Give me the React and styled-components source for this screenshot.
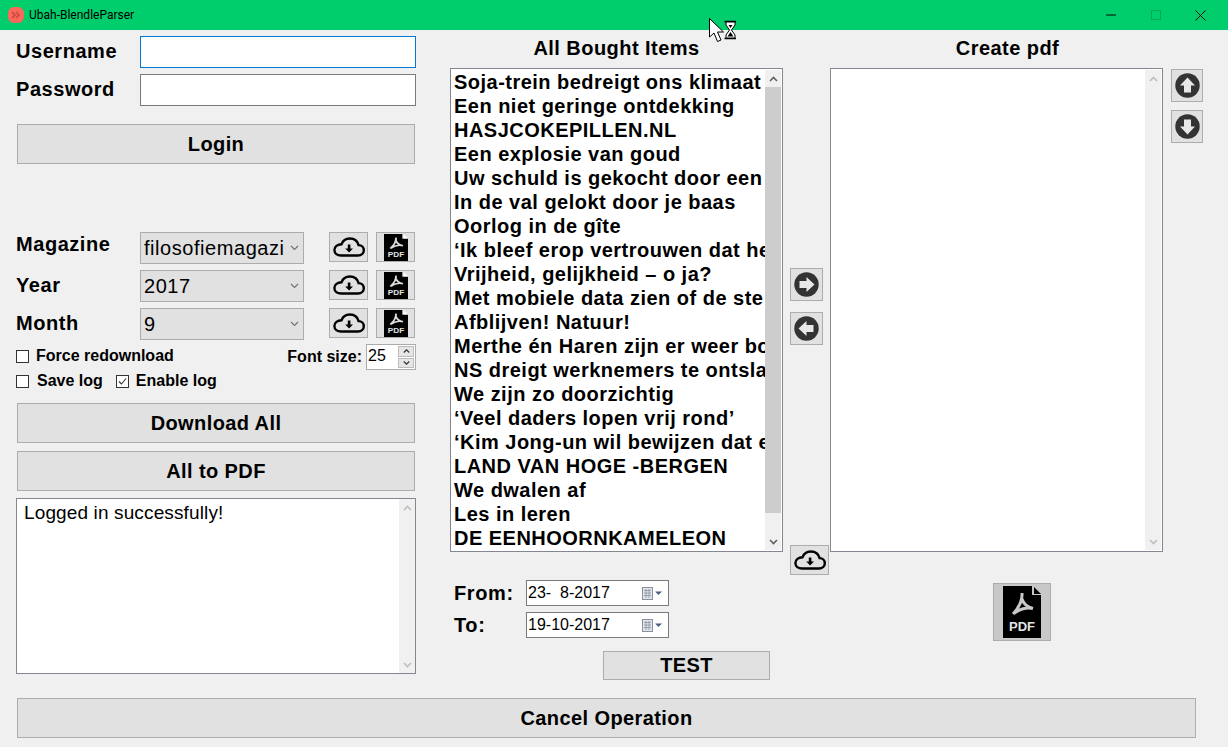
import React from "react";
import styled, { createGlobalStyle } from "styled-components";

const GlobalStyle = createGlobalStyle`
  html, body { margin: 0; padding: 0; height: 100%; overflow: hidden; background: #f0f0f0; }
  body { font-family: "Liberation Sans", Arial, sans-serif; color: #000; }
`;

const Window = styled.div`
  position: relative;
  width: 1228px;
  height: 747px;
  overflow: hidden;
  background: #f0f0f0;
`;

const TitleBar = styled.div`
  height: 30px;
  background: #00ce6c;
  display: flex;
  align-items: center;
  padding-left: 8px;
`;

const AppBadge = styled.div`
  width: 16px;
  height: 16px;
  border-radius: 6px;
  background: #f8695c;
  display: flex;
  align-items: center;
  justify-content: center;
`;

const AppName = styled.span`
  margin-left: 5px;
  font: 12px Roboto, sans-serif;
  flex: 1;
`;

const WinControl = styled.div`
  width: 45px;
  height: 30px;
  display: flex;
  align-items: center;
  justify-content: center;
  margin-right: ${(p) => p.$mr || 0}px;
`;

const Main = styled.div`
  display: flex;
  height: 668px;
  padding-left: 16px;
`;

const LeftColumn = styled.div`
  width: 400px;
  margin-right: 34px;
  padding-top: 6px;
  display: flex;
  flex-direction: column;
`;

const FieldRow = styled.div`
  display: flex;
  align-items: center;
  height: 32px;
  margin-bottom: 6px;
`;

const FieldLabel = styled.label`
  width: 124px;
  flex: none;
  font-size: 20px;
  font-weight: bold;
  letter-spacing: 0.55px;
  margin-top: ${(p) => p.$up || 0}px;
`;

const TextInput = styled.input`
  width: 276px;
  height: 32px;
  box-sizing: border-box;
  background: #fff;
  border: 1px solid ${(p) => (p.$focused ? "#0078d7" : "#7a7a7a")};
  outline: none;
  padding: 0 4px;
`;

const BigButton = styled.button`
  display: block;
  box-sizing: border-box;
  width: ${(p) => p.$w || 398}px;
  height: ${(p) => p.$h || 40}px;
  margin: ${(p) => p.$m || "0 0 0 1px"};
  background: #e1e1e1;
  border: 1px solid #adadad;
  font-family: inherit;
  font-size: 20px;
  font-weight: bold;
  letter-spacing: 0.4px;
  color: #000;
  padding: 0;
`;

const Select = styled.div`
  width: 164px;
  height: 32px;
  box-sizing: border-box;
  background: #e1e1e1;
  border: 1px solid #acacac;
  display: flex;
  align-items: center;
  font-size: 20px;
  letter-spacing: 0.55px;
  padding-left: 3px;
  padding-right: 4px;
`;

const SelectValue = styled.span`
  flex: 1;
  margin-right: 2px;
  overflow: hidden;
  white-space: nowrap;
`;

const IconButton = styled.button`
  box-sizing: border-box;
  flex: none;
  width: ${(p) => p.$w || 39}px;
  height: ${(p) => p.$h || 30}px;
  margin: ${(p) => p.$m || 0};
  padding: 0;
  background: ${(p) => p.$bg || "#e1e1e1"};
  border: 1px solid #adadad;
  display: flex;
  align-items: center;
  justify-content: center;
`;

const OptionsRow = styled.div`
  display: flex;
  align-items: center;
  height: ${(p) => p.$h}px;
  margin-top: ${(p) => p.$mt || 0}px;
`;

const CheckLabel = styled.label`
  display: flex;
  align-items: center;
  font-size: 16px;
  font-weight: bold;
  margin-right: 13px;
`;

const Box = styled.span`
  width: 13px;
  height: 13px;
  box-sizing: border-box;
  background: #fff;
  border: 1px solid #333;
  margin-right: ${(p) => p.$mr}px;
  display: flex;
  align-items: center;
  justify-content: center;
`;

const FontSize = styled.div`
  margin-left: auto;
  margin-top: 2px;
  display: flex;
  align-items: center;
  font-size: 16px;
  font-weight: bold;
`;

const Spinner = styled.div`
  width: 50px;
  height: 26px;
  margin-left: 4px;
  box-sizing: border-box;
  background: #fff;
  border: 1px solid #acacac;
  display: flex;
  font-size: 16px;
  font-weight: normal;
  padding-left: 1px;
  line-height: 22px;
`;

const SpinValue = styled.span`
  flex: 1;
`;

const SpinButtons = styled.div`
  width: 16px;
  display: flex;
  flex-direction: column;
  margin: 1px;
  gap: 1px;
`;

const SpinButton = styled.div`
  flex: 1;
  background: #e6e6e6;
  border: 1px solid #bcbcbc;
  display: flex;
  align-items: center;
  justify-content: center;
`;

const LogBox = styled.div`
  display: flex;
  box-sizing: border-box;
  width: 400px;
  height: 176px;
  margin-top: 7px;
  background: #fff;
  border: 1px solid #828790;
`;

const LogText = styled.div`
  flex: 1;
  font-size: 19px;
  letter-spacing: 0.13px;
  padding: 3px 0 0 7px;
`;

const MiddleColumn = styled.div`
  width: 333px;
  margin-right: 7px;
`;

const ColumnTitle = styled.div`
  height: 38px;
  line-height: 37px;
  text-align: center;
  font-size: 20px;
  font-weight: bold;
  letter-spacing: 0.45px;
  padding-left: ${(p) => p.$shift || 0}px;
`;

const ListBox = styled.div`
  display: flex;
  box-sizing: border-box;
  width: 333px;
  height: 484px;
  background: #fff;
  border: 1px solid #828790;
  padding: 1px;
`;

const ListItems = styled.div`
  flex: 1;
  min-width: 0;
  overflow: hidden;
  padding: 0 0 0 2px;
`;

const ListItem = styled.div`
  height: 24px;
  line-height: 24px;
  font-size: 20px;
  font-weight: bold;
  letter-spacing: 0.48px;
  white-space: nowrap;
`;

const ScrollBar = styled.div`
  flex: none;
  width: 16px;
  display: flex;
  flex-direction: column;
  background: #f0f0f0;
`;

const ScrollArrow = styled.div`
  height: 17px;
  flex: none;
  display: flex;
  align-items: center;
  justify-content: center;
`;

const ScrollThumb = styled.div`
  height: 426px;
  background: #cdcdcd;
`;

const ScrollTrack = styled.div`
  flex: 1;
`;

const DateRows = styled.div`
  margin-top: 28px;
  display: flex;
  flex-direction: column;
  gap: 6px;
`;

const DateRow = styled.div`
  display: flex;
  align-items: center;
  height: 26px;
  padding-left: 4px;
`;

const DateLabel = styled.span`
  width: 72px;
  font-size: 20px;
  font-weight: bold;
  letter-spacing: 0.6px;
`;

const DateInput = styled.div`
  width: 143px;
  height: 26px;
  box-sizing: border-box;
  background: #fff;
  border: 1px solid #7a7a7a;
  display: flex;
  align-items: center;
  justify-content: space-between;
  font-size: 16px;
  white-space: pre;
  padding: 0 4px 0 1px;
`;

const TransferColumn = styled.div`
  width: 39px;
  margin-right: 1px;
  padding-top: 238px;
  display: flex;
  flex-direction: column;
`;

const RightColumn = styled.div`
  width: 333px;
`;

const ArrowColumn = styled.div`
  margin-left: 8px;
  padding-top: 39px;
  display: flex;
  flex-direction: column;
  gap: 8px;
`;

const Footer = styled.div`
  padding-left: 17px;
`;

const CursorLayer = styled.div`
  position: absolute;
  left: 708px;
  top: 17px;
  pointer-events: none;
`;

const Cloud = () => (
  <svg width="32" height="20" viewBox="0 0 32 20">
    <path
      d="M8 18.5 H25 C28.5 18.5 30.8 16 30.8 13.2 C30.8 10.3 28.6 8.2 25.6 8.1 C24.6 4 21 1.5 16.8 1.5 C12.9 1.5 9.8 3.7 8.6 7.2 C4.5 7.4 1.4 9.8 1.4 13 C1.4 16.2 4.3 18.5 8 18.5 Z"
      fill="none"
      stroke="#000"
      strokeWidth="2.4"
    />
    <path d="M14.8 7.5 h2.6 v4 h2.6 l-3.9 4 -3.9 -4 h2.6 z" fill="#000" />
  </svg>
);

// stretched to whatever box it gets, the small ones are squatter than the big one
const PdfGlyph = ({ w, h, fold = "#000", mark = "#c8c8c8" }) => (
  <svg width={w} height={h} viewBox="0 0 38 52" preserveAspectRatio="none">
    <path d="M0 0 H29 V9 H38 V52 H0 Z" fill="#000" />
    <path d="M31 1 L38 8 H31 Z" fill={fold} />
    <path
      d="M19 7 C19.5 14 15.5 22 10 28 M19 13 C20.5 18 24 21 30 22.5 C24 21 16 23 11 27.5"
      fill="none"
      stroke={mark}
      strokeWidth="3"
    />
    <text x="19" y="45" textAnchor="middle" fontFamily="Liberation Sans" fontWeight="bold" fontSize="13" fill="#e4e4e4">
      PDF
    </text>
  </svg>
);

const RoundArrow = ({ dir }) => {
  const angle = { up: 0, right: 90, down: 180, left: 270 }[dir];
  return (
    <svg width="25" height="25" viewBox="0 0 25 25">
      <circle cx="12.5" cy="12.5" r="12.2" fill="#333" />
      <path
        d="M12.5 4.5 L20 12.5 H16 V19.5 H9 V12.5 H5 Z"
        fill="#e8e8e8"
        transform={`rotate(${angle} 12.5 12.5)`}
      />
    </svg>
  );
};

const Chevron = ({ up, color = "#606060", w = 9, sw = 1.6 }) => (
  <svg width={w} height="6" viewBox="0 0 9 6">
    <path
      d={up ? "M1 5 L4.5 1.5 L8 5" : "M1 1 L4.5 4.5 L8 1"}
      fill="none"
      stroke={color}
      strokeWidth={sw}
    />
  </svg>
);

const Scroller = ({ active }) => (
  <ScrollBar>
    <ScrollArrow>
      <Chevron up color={active ? "#606060" : "#bfbfbf"} />
    </ScrollArrow>
    {active && <ScrollThumb />}
    <ScrollTrack />
    <ScrollArrow>
      <Chevron color={active ? "#606060" : "#bfbfbf"} />
    </ScrollArrow>
  </ScrollBar>
);

const CalendarIcon = () => (
  <svg width="22" height="13" viewBox="0 0 22 13">
    <rect x="0.5" y="0.5" width="10" height="12" fill="#dfe3ea" stroke="#8a8f98" />
    <path d="M2 3.5 H9 M2 6 H9 M2 8.5 H9 M4 2 V11 M7 2 V11" stroke="#9aa0aa" />
    <path d="M13 4.5 H20 L16.5 8 Z" fill="#4d6185" />
  </svg>
);

const items = [
  "Soja-trein bedreigt ons klimaat",
  "Een niet geringe ontdekking",
  "HASJCOKEPILLEN.NL",
  "Een explosie van goud",
  "Uw schuld is gekocht door een",
  "In de val gelokt door je baas",
  "Oorlog in de gîte",
  "‘Ik bleef erop vertrouwen dat he",
  "Vrijheid, gelijkheid – o ja?",
  "Met mobiele data zien of de ste",
  "Afblijven! Natuur!",
  "Merthe én Haren zijn er weer bo",
  "NS dreigt werknemers te ontsla",
  "We zijn zo doorzichtig",
  "‘Veel daders lopen vrij rond’",
  "‘Kim Jong-un wil bewijzen dat e",
  "LAND VAN HOGE -BERGEN",
  "We dwalen af",
  "Les in leren",
  "DE EENHOORNKAMELEON",
];

const selects = [
  { label: "Magazine", value: "filosofiemagazi", up: -8 },
  { label: "Year", value: "2017", up: -2 },
  { label: "Month", value: "9", up: -2 },
];

export default function App() {
  return (
    <Window>
      <GlobalStyle />
      <TitleBar>
        <AppBadge>
          <svg width="10" height="8" viewBox="0 0 10 8">
            <path d="M1 1 L4 4 L1 7 M5 1 L8 4 L5 7" fill="none" stroke="#c9483c" strokeWidth="1.6" />
          </svg>
        </AppBadge>
        <AppName>Ubah-BlendleParser</AppName>
        <WinControl>
          <svg width="10" height="10" viewBox="0 0 10 10">
            <path d="M0 5 H10" stroke="#000" />
          </svg>
        </WinControl>
        <WinControl>
          <svg width="10" height="10" viewBox="0 0 10 10">
            <rect x="0.5" y="0.5" width="9" height="9" fill="none" stroke="#00a957" />
          </svg>
        </WinControl>
        <WinControl $mr={5}>
          <svg width="11" height="11" viewBox="0 0 11 11">
            <path d="M0.5 0.5 L10.5 10.5 M10.5 0.5 L0.5 10.5" stroke="#000" />
          </svg>
        </WinControl>
      </TitleBar>

      <Main>
        <LeftColumn>
          <FieldRow>
            <FieldLabel $up={-2}>Username</FieldLabel>
            <TextInput $focused />
          </FieldRow>
          <FieldRow>
            <FieldLabel $up={-2}>Password</FieldLabel>
            <TextInput type="password" />
          </FieldRow>
          <BigButton $m="12px 0 68px 1px">Login</BigButton>

          {selects.map((s) => (
            <FieldRow key={s.label}>
              <FieldLabel $up={s.up}>{s.label}</FieldLabel>
              <Select>
                <SelectValue>{s.value}</SelectValue>
                <Chevron color="#707070" sw={1.1} />
              </Select>
              <IconButton $m="0 0 2px 25px">
                <Cloud />
              </IconButton>
              <IconButton $m="0 0 2px 8px">
                <PdfGlyph w={24} h={27} fold="#fff" mark="#dcdcdc" />
              </IconButton>
            </FieldRow>
          ))}

          <OptionsRow $h={26} $mt={-3}>
            <CheckLabel>
              <Box $mr={7} />
              Force redownload
            </CheckLabel>
            <FontSize>
              Font size:
              <Spinner>
                <SpinValue>25</SpinValue>
                <SpinButtons>
                  <SpinButton>
                    <Chevron up color="#333" w={7} />
                  </SpinButton>
                  <SpinButton>
                    <Chevron color="#333" w={7} />
                  </SpinButton>
                </SpinButtons>
              </Spinner>
            </FontSize>
          </OptionsRow>
          <OptionsRow $h={24}>
            <CheckLabel>
              <Box $mr={8} />
              Save log
            </CheckLabel>
            <CheckLabel>
              <Box $mr={7}>
                <svg width="11" height="11" viewBox="0 0 11 11">
                  <path d="M2 5.5 L4.5 8 L9 2.5" fill="none" stroke="#333" strokeWidth="1.1" />
                </svg>
              </Box>
              Enable log
            </CheckLabel>
          </OptionsRow>

          <BigButton $m="10px 0 8px 1px">Download All</BigButton>
          <BigButton>All to PDF</BigButton>
          <LogBox>
            <LogText>Logged in successfully!</LogText>
            <Scroller />
          </LogBox>
        </LeftColumn>

        <MiddleColumn>
          <ColumnTitle>All Bought Items</ColumnTitle>
          <ListBox>
            <ListItems>
              {items.map((t) => (
                <ListItem key={t}>{t}</ListItem>
              ))}
            </ListItems>
            <Scroller active />
          </ListBox>
          <DateRows>
            <DateRow>
              <DateLabel>From:</DateLabel>
              <DateInput>
                {"23-  8-2017"}
                <CalendarIcon />
              </DateInput>
            </DateRow>
            <DateRow>
              <DateLabel>To:</DateLabel>
              <DateInput>
                19-10-2017
                <CalendarIcon />
              </DateInput>
            </DateRow>
          </DateRows>
          <BigButton $w={167} $h={29} $m="13px 0 0 153px">
            TEST
          </BigButton>
        </MiddleColumn>

        <TransferColumn>
          <IconButton $w={33} $h={33}>
            <RoundArrow dir="right" />
          </IconButton>
          <IconButton $w={33} $h={33} $m="11px 0 0">
            <RoundArrow dir="left" />
          </IconButton>
          <IconButton $m="200px 0 0">
            <Cloud />
          </IconButton>
        </TransferColumn>

        <RightColumn>
          <ColumnTitle $shift={22}>Create pdf</ColumnTitle>
          <ListBox>
            <ListItems />
            <Scroller />
          </ListBox>
          <IconButton $w={58} $h={58} $bg="#c8c8c8" $m="31px 0 0 163px">
            <PdfGlyph w={38} h={52} />
          </IconButton>
        </RightColumn>

        <ArrowColumn>
          <IconButton $w={32} $h={33}>
            <RoundArrow dir="up" />
          </IconButton>
          <IconButton $w={32} $h={33}>
            <RoundArrow dir="down" />
          </IconButton>
        </ArrowColumn>
      </Main>

      <Footer>
        <BigButton $w={1179} $m="0">
          Cancel Operation
        </BigButton>
      </Footer>

      <CursorLayer>
        <svg width="30" height="28" viewBox="0 0 30 28">
          <path d="M1.5 1.5 V20 L6 16 L9.5 24.5 L13 23 L9.5 15 H15.5 Z" fill="#fff" stroke="#000" />
          <path d="M16.5 4.5 H28 M16.5 21.5 H28" stroke="#000" strokeWidth="1.6" />
          <path d="M18 5 H27 V8 L23.5 13 L27 18 V21 H18 V18 L21.5 13 L18 8 Z" fill="#fff" stroke="#000" />
          <path d="M19.5 19.5 L22.5 15 L25.5 19.5 Z M20.5 8 H24.5 L22.5 11 Z" fill="#000" />
        </svg>
      </CursorLayer>
    </Window>
  );
}
